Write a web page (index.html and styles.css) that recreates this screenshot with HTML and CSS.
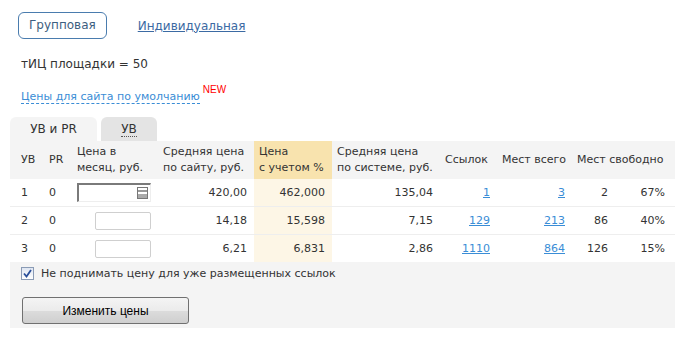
FILE: index.html
```html
<!DOCTYPE html>
<html lang="ru">
<head>
  <meta charset="UTF-8" />
  <title>Цены</title>
  <link rel="stylesheet" href="styles.css">
</head>
<body>
  <div class="page">
    <div class="mode-switch">
      <span class="mode active">Групповая</span>
      <a href="#" class="mode">Индивидуальная</a>
    </div>

    <p class="tic">тИЦ площадки = 50</p>

    <p class="defaults">
      <a href="#" class="dashed">Цены для сайта по умолчанию</a><sup class="new">NEW</sup>
    </p>

    <div class="tabs">
      <span class="tab active">УВ и PR</span>
      <span class="tab"><span class="dotted">УВ</span></span>
    </div>

    <div class="prices">
      <table>
        <colgroup>
          <col class="c-uv"><col class="c-pr"><col class="c-price"><col class="c-avg">
          <col class="c-hl"><col class="c-sys"><col class="c-links"><col class="c-total">
          <col class="c-free"><col class="c-pct">
        </colgroup>
        <thead>
          <tr>
            <th>УВ</th>
            <th>PR</th>
            <th>Цена в<br>месяц, руб.</th>
            <th>Средняя цена<br>по сайту, руб.</th>
            <th class="hl">Цена<br>с учетом %</th>
            <th>Средняя цена<br>по системе, руб.</th>
            <th>Ссылок</th>
            <th>Мест всего</th>
            <th colspan="2">Мест свободно</th>
          </tr>
        </thead>
        <tbody>
          <tr>
            <td>1</td><td>0</td>
            <td class="r"><span class="price-input focus"><span class="fill-icon"></span></span></td>
            <td class="r">420,00</td>
            <td class="r hl">462,000</td>
            <td class="r">135,04</td>
            <td class="r"><a href="#">1</a></td>
            <td class="r"><a href="#">3</a></td>
            <td class="r">2</td>
            <td class="r">67%</td>
          </tr>
          <tr>
            <td>2</td><td>0</td>
            <td class="r"><span class="price-input"></span></td>
            <td class="r">14,18</td>
            <td class="r hl">15,598</td>
            <td class="r">7,15</td>
            <td class="r"><a href="#">129</a></td>
            <td class="r"><a href="#">213</a></td>
            <td class="r">86</td>
            <td class="r">40%</td>
          </tr>
          <tr>
            <td>3</td><td>0</td>
            <td class="r"><span class="price-input"></span></td>
            <td class="r">6,21</td>
            <td class="r hl">6,831</td>
            <td class="r">2,86</td>
            <td class="r"><a href="#">1110</a></td>
            <td class="r"><a href="#">864</a></td>
            <td class="r">126</td>
            <td class="r">15%</td>
          </tr>
        </tbody>
      </table>

      <div class="footer">
        <label class="keep">
          <span class="check">
            <svg width="9" height="9" viewBox="0 0 9 9"><path d="M1 4.5 L3.5 7.5 L8 1" fill="none" stroke="#2a4f9a" stroke-width="1.8"/></svg>
          </span>
          Не поднимать цену для уже размещенных ссылок
        </label>
        <button class="save">Изменить цены</button>
      </div>
    </div>
  </div>
</body>
</html>
```

FILE: styles.css
```css
body {
  margin: 0;
  font-family: "DejaVu Sans", Verdana, sans-serif;
  font-size: 12px;
  color: #333;
  background: #fff;
}

.page {
  padding: 12px 22px 0 10px;
}

a {
  color: #3a8dd6;
}

.mode-switch {
  display: flex;
  align-items: center;
  gap: 31px;
  padding-left: 8px;
}

.mode {
  font-size: 12px;
}

.mode.active {
  border: 1px solid #4a7cae;
  border-radius: 6px;
  padding: 5px 10px 6px;
  color: #3d5e80;
}

a.mode {
  color: #3b6aa3;
}

.tic {
  margin: 18px 0 0 11px;
  font-size: 12px;
}

.defaults {
  margin: 19px 0 0 11px;
  font-size: 11px;
  line-height: 14px;
}

.dashed {
  text-decoration: none;
  border-bottom: 1px dashed #3a8dd6;
}

.new {
  color: #f00;
  font-size: 10px;
  line-height: 0;
  font-family: "Liberation Sans", Arial, sans-serif;
  margin-left: 3px;
  vertical-align: 7px;
}

.tabs {
  display: flex;
  gap: 4px;
  margin-top: 13px;
}

.tab {
  height: 24px;
  line-height: 25px;
  text-align: center;
  border-radius: 6px 6px 0 0;
  background: #e4e4e4;
  width: 56px;
}

.tab.active {
  background: #f4f4f4;
  width: 87px;
}

.dotted {
  border-bottom: 1px dotted #555;
}

.prices {
  background: #f4f4f4;
  width: 665px;
}

table {
  width: 665px;
  table-layout: fixed;
  border-collapse: collapse;
  font-size: 11px;
}

.c-uv { width: 34px; }
.c-pr { width: 28px; }
.c-price { width: 86px; }
.c-avg { width: 96px; }
.c-hl { width: 78px; }
.c-sys { width: 108px; }
.c-links { width: 57px; }
.c-total { width: 75px; }
.c-free { width: 43px; }
.c-pct { width: 60px; }

th {
  font-weight: normal;
  text-align: left;
  height: 38px;
  line-height: 16px;
  padding: 0 5px;
  white-space: nowrap;
}

th:first-child, td:first-child {
  padding-left: 11px;
}

th.hl {
  background: #f8e3ae;
}

td {
  background: #fff;
  height: 27px;
  padding: 0 7px 0 5px;
  border-bottom: 1px solid #eee;
  white-space: nowrap;
}

tbody tr:last-child td {
  border-bottom: none;
}

td.r {
  text-align: right;
}

td.hl {
  background: #fdf6e6;
}

td:last-child {
  padding-right: 10px;
}

.price-input {
  display: inline-block;
  vertical-align: middle;
  width: 54px;
  height: 16px;
  border: 1px solid #cfcfcf;
  border-radius: 2px;
  background: #fff;
  position: relative;
}

.price-input.focus {
  width: 71px;
  height: 16px;
  border-radius: 0;
  border-top: 2px solid #7a7a7a;
  border-left: 2px solid #7a7a7a;
  border-right: 1px solid #eee;
  border-bottom: 1px solid #eee;
}

.fill-icon {
  position: absolute;
  right: 2px;
  top: 2px;
  width: 9px;
  height: 10px;
  border: 1px solid #777;
  background: linear-gradient(#fff 0 2px, #999 2px 4px, #fff 4px 6px, #aaa 6px);
}

.footer {
  padding: 4px 12px 4px 11px;
}

.keep {
  display: flex;
  align-items: center;
  gap: 7px;
  font-size: 11px;
  height: 15px;
}

.check {
  display: inline-flex;
  align-items: center;
  justify-content: center;
  width: 11px;
  height: 11px;
  border: 1px solid #8a9bb5;
  background: linear-gradient(#dfe6f2, #fff);
}

.save {
  display: block;
  margin: 16px 0 0 1px;
  width: 167px;
  height: 27px;
  border: 1px solid #707070;
  border-radius: 3px;
  background: linear-gradient(#f4f4f4, #ebebeb 50%, #dcdcdc 51%, #cfcfcf);
  font-family: "Liberation Sans", Tahoma, sans-serif;
  font-size: 12px;
  color: #000;
}
```
